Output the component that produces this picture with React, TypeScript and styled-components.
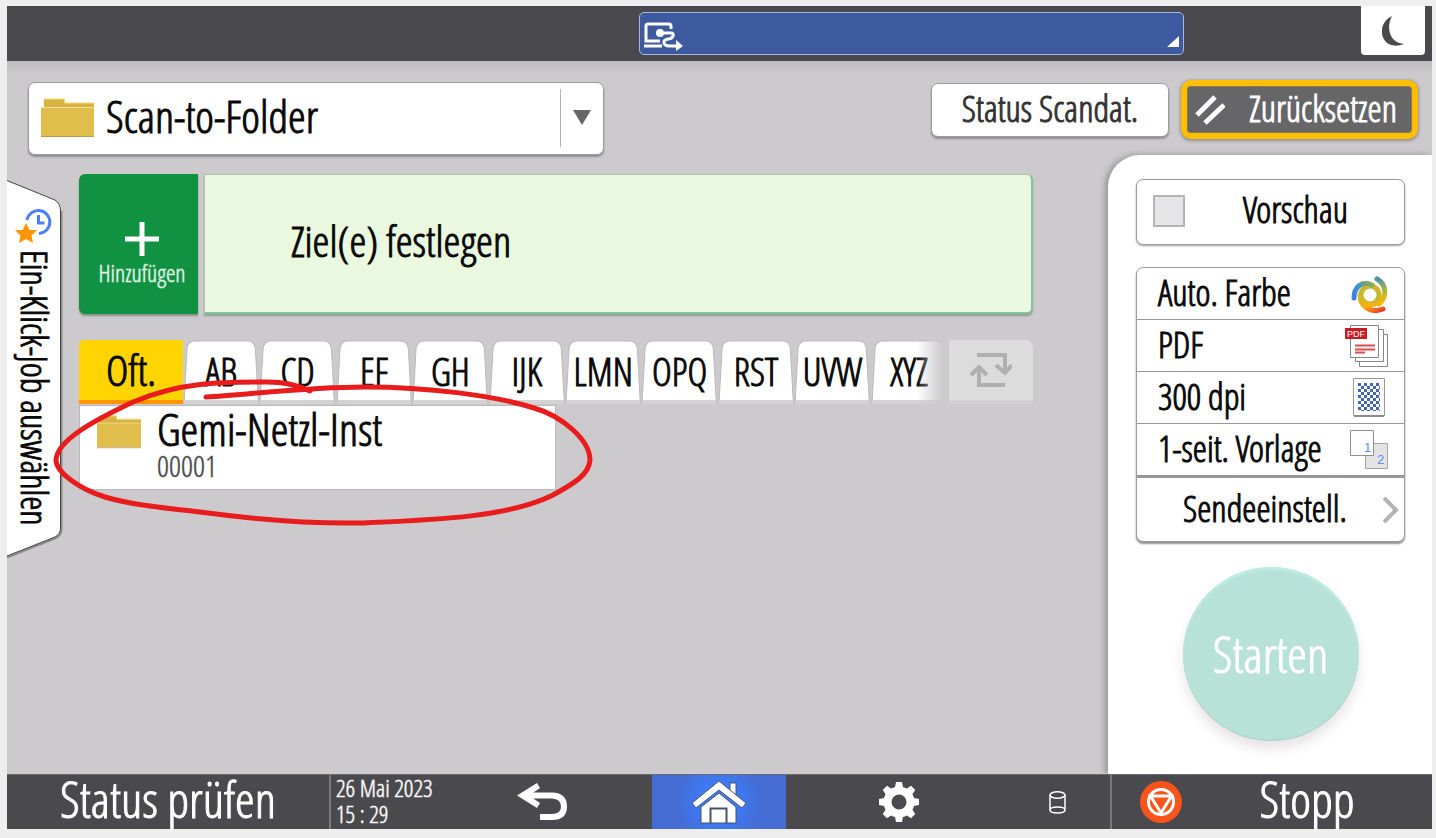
import React from "react";
import styled, { createGlobalStyle, css } from "styled-components";

const GlobalStyle = createGlobalStyle`
  *, *::before, *::after { box-sizing: border-box; }
  body { margin: 0; background: #eeeeee; }
  body, button, select, input {
    font-family: "Open Sans Condensed Light", "Roboto Condensed", "Liberation Sans", sans-serif;
    -webkit-text-stroke: 1px currentColor;
  }
  button, select { margin: 0; padding: 0; border: 0; background: none; color: inherit; cursor: pointer; }
  svg { display: block; flex: none; -webkit-text-stroke: 0; }
`;

const Page = styled.div`
  position: relative;
  display: flex;
  flex-direction: column;
  min-height: 100vh;
  padding: 6px 4px 9px 7px;
  color: #080808;
`;

const TopBar = styled.header`
  display: grid;
  grid-template-columns: 632fr 545fr 177fr 64px;
  height: 55px;
  padding-right: 7px;
  background: #4a494d;
`;

const JobBanner = styled.button`
  grid-column: 2;
  display: flex;
  align-items: center;
  justify-content: space-between;
  height: 43px;
  margin-top: 6px;
  padding: 6px 4px 0 4px;
  border: 1px solid #a9b9dc;
  border-radius: 5px;
  background: #3d59a0;
`;

const BannerCorner = styled.svg`
  align-self: flex-end;
  margin-bottom: 7px;
`;

const SleepButton = styled.button`
  grid-column: 4;
  display: flex;
  align-items: center;
  justify-content: center;
  height: 49px;
  border-radius: 0 0 4px 4px;
  background: #ffffff;
`;

const Body = styled.main`
  flex: 1;
  display: flex;
  flex-direction: column;
  background: linear-gradient(#bdbbbd, #cccacc 12px);
`;

const TitleRow = styled.div`
  display: flex;
  align-items: flex-start;
  height: 94px;
  padding: 19px 14px 0 21px;
`;

const raised = css`
  border: 1px solid #9c9b9d;
  border-radius: 7px;
  background: #ffffff;
  box-shadow: 0 2px 2px #8f8e90;
`;

const AppPicker = styled.label`
  ${raised}
  display: flex;
  align-items: center;
  width: 576px;
  height: 73px;
  margin: 2px auto 0 0;
  padding: 0 0 2px 12px;
`;

const AppSelect = styled.select`
  flex: 1;
  height: 58px;
  padding: 0 0 4px 12px;
  appearance: none;
  border-right: 1px solid #b4b4b4;
  font-size: 45px;
  line-height: 54px;
`;

const PickerArrow = styled.svg`
  margin: 0 12px;
  pointer-events: none;
`;

const StatusButton = styled.button`
  ${raised}
  width: 238px;
  height: 54px;
  margin: 3px 12px 0 0;
  padding-bottom: 2px;
  color: #333333;
  font-size: 36px;
  line-height: 48px;
`;

const ResetButton = styled.button`
  display: flex;
  align-items: center;
  justify-content: space-between;
  width: 237px;
  height: 59px;
  padding: 0 15px 0 8px;
  border: 6px solid #ffbf00;
  border-radius: 10px;
  background: #666567;
  box-shadow: 0 1px 3px 1px #929193, inset 0 0 0 1px #8c7a45;
  color: #ffffff;
  font-size: 36px;
  line-height: 44px;
`;

const ResetText = styled.span`
  padding-bottom: 2px;
`;

const Workspace = styled.div`
  flex: 1;
  display: flex;
`;

const JobTab = styled.button`
  position: relative;
  display: flex;
  flex-direction: column;
  align-items: center;
  gap: 6px;
  flex: none;
  width: 55px;
  height: 378px;
  margin: 25px 17px 0 0;
  padding: 29px 2px 0 0;
  font-size: 36px;
`;

const JobTabShape = styled.svg`
  position: absolute;
  inset: 0;
  overflow: visible;
`;

const JobTabIcon = styled.svg`
  position: relative;
`;

const JobTabLabel = styled.span`
  position: relative;
  writing-mode: vertical-rl;
  line-height: 40px;
  white-space: nowrap;
`;

const Destinations = styled.section`
  flex: 1;
  min-width: 0;
  padding: 19px 75px 20px 0;
`;

const TargetRow = styled.div`
  display: flex;
  gap: 6px;
  height: 140px;
`;

const AddButton = styled.button`
  display: flex;
  flex-direction: column;
  align-items: center;
  gap: 4px;
  width: 119px;
  padding: 48px 0 0 7px;
  border-radius: 6px 0 0 6px;
  background: #119142;
  box-shadow: 0 2px 2px #88908a;
  color: #e6f7ea;
  font-size: 24px;
  line-height: 26px;
  -webkit-text-stroke-color: rgba(230, 247, 234, 0.5);
`;

const TargetField = styled.div`
  flex: 1;
  display: flex;
  align-items: center;
  padding: 0 0 7px 86px;
  border: 1px solid #b3c3a8;
  border-right: 2px solid #82c39b;
  border-bottom: 2px solid #82c39b;
  border-radius: 0 6px 6px 0;
  background: #e9f8de;
  box-shadow: 0 2px 2px #939b94;
  font-size: 43px;
`;

const TabRow = styled.div`
  display: flex;
  height: 65px;
  margin-top: 26px;
`;

const FrequentTab = styled.button`
  width: 104px;
  height: 64px;
  border-bottom: 4px solid #ff9500;
  border-radius: 5px 0 0 0;
  background: #ffd400;
  font-size: 43px;
  line-height: 56px;
`;

const LetterTabButton = styled.button`
  position: relative;
  flex: 1;
  height: 64px;
  padding-bottom: 2px;
  font-size: 38px;
  line-height: 52px;
`;

const TabShape = styled.svg`
  position: absolute;
  inset: 0;
  width: 100%;
  height: 100%;
`;

const TabText = styled.span`
  position: relative;
`;

const TabFade = styled.span`
  position: absolute;
  inset: 0 0 0 auto;
  width: 30px;
  background: linear-gradient(90deg, rgba(204, 202, 204, 0), #cccacc 85%);
`;

const SwitchButton = styled.button`
  display: flex;
  align-items: center;
  justify-content: center;
  width: 84px;
  height: 64px;
  margin-left: 2px;
  border-bottom: 4px solid #d2d1d2;
  border-radius: 0 7px 0 0;
  background: #dcdcdc;
`;

const EntryList = styled.ul`
  margin: 0;
  padding: 0;
  list-style: none;
`;

const Entry = styled.button`
  display: flex;
  align-items: flex-start;
  gap: 16px;
  width: 50%;
  height: 85px;
  padding: 0 17px;
  border: 1px solid #b9b8ba;
  background: #ffffff;
  text-align: left;
`;

const EntryIcon = styled.span`
  padding-top: 9px;
`;

const EntryText = styled.span`
  display: flex;
  flex-direction: column;
`;

const EntryName = styled.span`
  font-size: 45px;
  line-height: 46px;
`;

const EntryCode = styled.span`
  color: #444444;
  font-size: 30px;
  line-height: 28px;
  -webkit-text-stroke-color: rgba(68, 68, 68, 0.4);
`;

const Panel = styled.aside`
  display: flex;
  flex-direction: column;
  align-items: center;
  width: 324px;
  padding: 24px 27px 32px 28px;
  border-radius: 32px 0 0 0;
  background: #ffffff;
  box-shadow: -3px 0 6px #949395;
  clip-path: inset(-8px 0 0 -16px);
  font-size: 36px;
`;

const Preview = styled.label`
  ${raised}
  display: flex;
  align-items: center;
  width: 100%;
  height: 66px;
  padding: 0 16px 2px;
  box-shadow: 0 1px 2px #a2a1a3;
`;

const PreviewBox = styled.input`
  appearance: none;
  flex: none;
  width: 32px;
  height: 32px;
  margin: 0;
  border: 2px solid #b4b4b4;
  background: #e5e5e7;
`;

const PreviewText = styled.span`
  flex: 1;
  padding: 0 0 2px 18px;
  line-height: 48px;
  text-align: center;
`;

const Settings = styled.div`
  ${raised}
  width: 100%;
  margin-top: 22px;
`;

const Setting = styled.button`
  display: flex;
  align-items: center;
  justify-content: space-between;
  width: 100%;
  height: 52px;
  padding: 0 16px 0 21px;
  border-bottom: 1px solid #979698;
  font-size: 36px;
  line-height: 44px;
  white-space: nowrap;
`;

const SettingText = styled.span`
  padding-bottom: 2px;
`;

const SendSettings = styled(Setting)`
  height: 65px;
  padding: 0 5px 0 46px;
  border-top: 2px solid #979698;
  border-bottom: 0;
`;

const StartButton = styled.button`
  width: 176px;
  height: 174px;
  margin-top: 25px;
  border-radius: 50%;
  background: #b8e2d8;
  box-shadow: inset 0 3px 2px #bdece2, inset 0 -1px 1px #abd0c9, 0 8px 12px rgba(90, 60, 80, 0.14);
  color: #ffffff;
  font-size: 50px;
`;

const BottomBar = styled.footer`
  display: grid;
  grid-template-columns: 322fr 110fr 213fr 134fr 226fr 98fr 322fr;
  height: 55px;
  border-top: 1px solid #6c6c6f;
  background: #4a494d;
  color: #ffffff;
`;

const BarText = styled.button`
  padding-bottom: 6px;
  font-size: 50px;
  line-height: 48px;
  white-space: nowrap;
`;

const Clock = styled.time`
  padding-left: 5px;
  border-left: 2px solid #78777a;
  font-size: 24px;
  line-height: 26px;
  white-space: nowrap;
  -webkit-text-stroke-color: rgba(255, 255, 255, 0.5);
`;

const BarIcon = styled.button<{ $nudge?: boolean }>`
  display: flex;
  align-items: center;
  justify-content: center;
  padding-right: ${(p) => (p.$nudge ? "8px" : "0")};
`;

const HomeButton = styled(BarIcon)`
  background: radial-gradient(circle at center, #3c7cff 20%, #456cd2 60%);
`;

const StopButton = styled.button`
  display: flex;
  align-items: center;
  padding-left: 28px;
  border-left: 2px solid #78777a;
`;

const StopText = styled.span`
  flex: 1;
  padding-bottom: 6px;
  text-align: center;
  font-size: 50px;
  line-height: 48px;
`;

const Marking = styled.svg`
  position: absolute;
  left: 50px;
  top: 375px;
  pointer-events: none;
`;

const LETTERS = ["AB", "CD", "EF", "GH", "IJK", "LMN", "OPQ", "RST", "UVW", "XYZ"];

function Folder({ width, height }: { width: number; height: number }) {
  return (
    <svg width={width} height={height} viewBox="0 0 54 40" preserveAspectRatio="none" aria-hidden="true">
      <path d="M3 9V1h21v4h30v7H3Z" fill="#d9b244" />
      <path d="M4 1h20v4h30" fill="none" stroke="#f1dc6e" />
      <path d="M0 9h54v29H0Z" fill="#e1bd4b" />
      <path d="M0 9.500h54" stroke="#f1dc92" />
      <path d="M0 38.500h54" stroke="#b99a57" strokeWidth="1" />
    </svg>
  );
}

function LetterTab({ label, last }: { label: string; last: boolean }) {
  return (
    <LetterTabButton role="tab">
      <TabShape viewBox="0 0 76 64" preserveAspectRatio="none" aria-hidden="true">
        <path d="M1 64 4 9Q5 1 11 1H65Q71 1 72 9L75 64Z" fill="#fff" stroke="#bab9bb" />
        <path d="M1.500 60H74.500V64H1.500Z" fill="#d3d3d3" />
      </TabShape>
      <TabText>{label}</TabText>
      {last && <TabFade />}
    </LetterTabButton>
  );
}

function ColourIcon() {
  return (
    <svg width="38" height="38" viewBox="0 0 38 38" fill="none" aria-hidden="true">
      <defs>
        <linearGradient id="blade1" x1="0" y1="1" x2="1" y2="0">
          <stop offset="0" stopColor="#3d7fe8" />
          <stop offset="0.5" stopColor="#4191cf" />
          <stop offset="1" stopColor="#91ae4a" />
        </linearGradient>
        <linearGradient id="blade2" x1="0" y1="0" x2="0" y2="1">
          <stop offset="0" stopColor="#4c93a8" />
          <stop offset="0.4" stopColor="#a9b63e" />
          <stop offset="1" stopColor="#ffb800" />
        </linearGradient>
        <linearGradient id="blade3" x1="0" y1="0" x2="1" y2="1">
          <stop offset="0" stopColor="#c2bd30" />
          <stop offset="0.5" stopColor="#ffac08" />
          <stop offset="1" stopColor="#e83b2e" />
        </linearGradient>
      </defs>
      <circle cx="20" cy="20" r="9" stroke="#c9b62c" strokeWidth="5" />
      <path d="M4 23C4 12 12 5 22 10" stroke="url(#blade1)" strokeWidth="5" strokeLinecap="round" />
      <path d="M27 4C37 10 37 22 29 29" stroke="url(#blade2)" strokeWidth="5" strokeLinecap="round" />
      <path d="M33 34C20 39 10 31 10 20" stroke="url(#blade3)" strokeWidth="5" strokeLinecap="round" />
      <path d="M14 28C18 31 24 31 28 28" stroke="#f8af13" strokeWidth="4" />
    </svg>
  );
}

function PdfIcon() {
  return (
    <svg width="43" height="44" viewBox="0 0 43 44" aria-hidden="true">
      <g fill="#fff" stroke="#858585">
        <path d="M14.500 10.500h28v32h-28Z" />
        <path d="M10.500 5.500h28v32h-28Z" />
        <path d="M5.500 1.500h28v32h-28Z" />
      </g>
      <path d="M0 4h22v11H0Z" fill="#cc1b22" />
      <text x="11" y="13" textAnchor="middle" fontSize="9" fill="#fff" fontFamily="Liberation Sans">PDF</text>
      <path d="M10 21.500h20M10 25.500h20M10 28.500h10" stroke="#dc4a50" strokeWidth="2" />
    </svg>
  );
}

function ResolutionIcon() {
  return (
    <svg width="35" height="39" viewBox="0 0 35 39" aria-hidden="true">
      <defs>
        <pattern id="dots" width="6" height="6" patternUnits="userSpaceOnUse" x="5" y="5">
          <path d="M0 0h3v3H0ZM3 3h3v3H3Z" fill="#4664b4" />
        </pattern>
      </defs>
      <path d="M.5 .5h31v37H.5Z" fill="#fff" stroke="#979797" />
      <path d="M1 38h30" stroke="#8b8b8b" strokeWidth="2" />
      <path d="M5 5h22v28H5Z" fill="url(#dots)" />
    </svg>
  );
}

function SidesIcon() {
  return (
    <svg width="38" height="39" viewBox="0 0 38 39" fontFamily="Liberation Sans" fontSize="13" fill="#5b8ff0" aria-hidden="true">
      <path d="M15.500 13.500h22v25h-22Z" fill="#e3e3e3" stroke="#a5a5a5" />
      <path d="M.5 .5h23v25H.5Z" fill="#fff" stroke="#8e8e8e" />
      <text x="14" y="22">1</text>
      <text x="27" y="34">2</text>
    </svg>
  );
}

export default function App() {
  return (
    <Page>
      <GlobalStyle />
      <TopBar>
        <JobBanner aria-label="Auftrag">
          <svg width="40" height="30" viewBox="0 0 40 30" fill="none" stroke="#fff" strokeWidth="3" aria-hidden="true">
            <path d="M27 7V4Q27 2 25 2H4Q2 2 2 4V19H16" />
            <path d="M0 24h18" />
            <path d="M16 11h11Q30 11 29 14Q28 17 24 17Q19 18 20 21Q21 24 25 24H34" />
            <circle cx="16" cy="11" r="4" fill="#fff" stroke="none" />
            <path d="M32 18l7 6-7 5Z" fill="#fff" stroke="none" />
          </svg>
          <BannerCorner width="12" height="11" viewBox="0 0 12 11" aria-hidden="true">
            <path d="M12 0v11H0Z" fill="#fff" />
          </BannerCorner>
        </JobBanner>
        <SleepButton aria-label="Energiesparen">
          <svg width="22" height="30" viewBox="0 0 22 30" aria-hidden="true">
            <path d="M10 0C-2 6-3 20 5 27Q12 32 22 28C7 27 4 11 10 0Z" fill="#4a494d" />
          </svg>
        </SleepButton>
      </TopBar>

      <Body>
        <TitleRow>
          <AppPicker>
            <Folder width={53} height={40} />
            <AppSelect aria-label="Funktion">
              <option>Scan-to-Folder</option>
            </AppSelect>
            <PickerArrow width="18" height="15" viewBox="0 0 18 15" aria-hidden="true">
              <path d="M0 0h18L9 15Z" fill="#666567" />
            </PickerArrow>
          </AppPicker>
          <StatusButton>Status Scandat.</StatusButton>
          <ResetButton>
            <svg width="30" height="30" viewBox="0 0 30 30" stroke="#fff" strokeWidth="5" aria-hidden="true">
              <path d="M2 20 20 2M10 28 29 10" />
            </svg>
            <ResetText>Zurücksetzen</ResetText>
          </ResetButton>
        </TitleRow>

        <Workspace>
          <JobTab>
            <JobTabShape width="55" height="378" viewBox="0 0 55 378" aria-hidden="true">
              <path d="M0 377.500 49 358Q54.500 355 54.500 349V31" fill="none" stroke="#8b8a8c" strokeWidth="2" />
              <path d="M0 .5 48 20Q53.500 24 53.500 31V348Q53.500 354 48 357L0 376Z" fill="#fff" />
              <path d="M0 .5 48 20Q53.500 24 53.500 31V348Q53.500 354 48 357L0 376" fill="none" stroke="#444" />
            </JobTabShape>
            <JobTabIcon width="37" height="35" viewBox="0 0 37 35" aria-hidden="true">
              <path d="M12 11A11.500 11.500 0 1 1 24 24.500" fill="none" stroke="#4c80f2" strokeWidth="3" />
              <path d="M23.500 6v8h6" fill="none" stroke="#4c80f2" strokeWidth="3" />
              <path d="m11 14 3.500 7H22l-5.500 5.500L18 34l-7-4-7 4 1.500-7.500L0 21h7.500Z" fill="#ff9500" />
            </JobTabIcon>
            <JobTabLabel>Ein-Klick-Job auswählen</JobTabLabel>
          </JobTab>

          <Destinations>
            <TargetRow>
              <AddButton>
                <svg width="34" height="34" viewBox="0 0 34 34" aria-hidden="true">
                  <path d="M17 0v34M0 17h34" stroke="#fff" strokeWidth="5" />
                </svg>
                Hinzufügen
              </AddButton>
              <TargetField>Ziel(e) festlegen</TargetField>
            </TargetRow>
            <TabRow role="tablist">
              <FrequentTab role="tab" aria-selected="true">Oft.</FrequentTab>
              {LETTERS.map((l, i) => (
                <LetterTab key={l} label={l} last={i === LETTERS.length - 1} />
              ))}
              <SwitchButton aria-label="Titel wechseln">
                <svg width="42" height="34" viewBox="0 0 42 34" fill="none" stroke="#b0b0b0" strokeWidth="4" aria-hidden="true">
                  <path d="M7 2h28v18M26 12l9 8 7-8" />
                  <path d="M35 32H9V14M1 22l8-8 8 8" />
                </svg>
              </SwitchButton>
            </TabRow>
            <EntryList>
              <li>
                <Entry>
                  <EntryIcon><Folder width={44} height={34} /></EntryIcon>
                  <EntryText>
                    <EntryName>Gemi-Netzl-Inst</EntryName>
                    <EntryCode>00001</EntryCode>
                  </EntryText>
                </Entry>
              </li>
            </EntryList>
          </Destinations>

          <Panel>
            <Preview>
              <PreviewBox type="checkbox" />
              <PreviewText>Vorschau</PreviewText>
            </Preview>
            <Settings>
              <Setting><SettingText>Auto. Farbe</SettingText><ColourIcon /></Setting>
              <Setting><SettingText>PDF</SettingText><PdfIcon /></Setting>
              <Setting><SettingText>300 dpi</SettingText><ResolutionIcon /></Setting>
              <Setting><SettingText>1-seit. Vorlage</SettingText><SidesIcon /></Setting>
              <SendSettings>
                <SettingText>Sendeeinstell.</SettingText>
                <svg width="16" height="28" viewBox="0 0 16 28" fill="none" stroke="#b3b3b3" strokeWidth="4" aria-hidden="true">
                  <path d="M1 2 13 14 1 26" />
                </svg>
              </SendSettings>
            </Settings>
            <StartButton>Starten</StartButton>
          </Panel>
        </Workspace>
      </Body>

      <BottomBar>
        <BarText>Status prüfen</BarText>
        <Clock>26 Mai 2023<br />15 : 29</Clock>
        <BarIcon $nudge aria-label="Zurück">
          <svg width="50" height="38" viewBox="0 0 50 38" fill="none" aria-hidden="true">
            <path d="M10 12.500H35Q47 13 47 23.500T35 34H23" stroke="#fff" strokeWidth="6" />
            <path d="M20 0 0 12.500 20 25l3-5-11-7.500L23 5Z" fill="#fff" />
          </svg>
        </BarIcon>
        <HomeButton aria-label="Startseite">
          <svg width="54" height="43" viewBox="0 0 54 43" fill="#fff" stroke="#46526e" strokeWidth="1" aria-hidden="true">
            <path d="M38 2h6v17l-6-5Z" />
            <path d="M27 12 44 26v16H9V26Z" />
            <path d="M27 0 54 22l-4 5L27 9 4 27 0 22Z" />
            <path d="M18.500 42V27.500h16V42" fill="none" strokeWidth="2" />
          </svg>
        </HomeButton>
        <BarIcon aria-label="Einstellungen">
          <svg width="40" height="40" viewBox="-20 -20 40 40" fill="#fff" aria-hidden="true">
            <circle r="11.500" fill="none" stroke="#fff" strokeWidth="8" />
            {[0, 45, 90, 135, 180, 225, 270, 315].map((a) => (
              <path key={a} d="M-4.500-12-3-20H3L4.500-12Z" transform={`rotate(${a})`} />
            ))}
          </svg>
        </BarIcon>
        <BarIcon $nudge aria-label="Speicher">
          <svg width="17" height="23" viewBox="0 0 17 23" fill="none" stroke="#ffffff" strokeWidth="1.500" aria-hidden="true">
            <ellipse cx="8.500" cy="4" rx="7.500" ry="3.200" />
            <path d="M1 4v15c0 4 15 4 15 0V4M1 19c0-4 15-4 15 0" />
          </svg>
        </BarIcon>
        <StopButton>
          <svg width="42" height="42" viewBox="-21 -21 42 42" aria-hidden="true">
            <circle r="21" fill="#f9541b" />
            <g fill="none" stroke="#fff" strokeWidth="3">
              <circle r="12.500" />
              <path d="M-10.500-6H10.500L0 11Z" />
            </g>
          </svg>
          <StopText>Stopp</StopText>
        </StopButton>
      </BottomBar>

      <Marking width="550" height="155" viewBox="50 375 550 155" fill="none" stroke="#e81c1c" strokeWidth="5" strokeLinecap="round" strokeLinejoin="round" aria-hidden="true">
        <path d="M206 397C252 394 310 387 365 387C426 387 493 395 534 408C562 416 590 440 590 460C589 475 573 484 553 495C507 518 430 520 360 523C300 524 245 518 200 512C166 508 132 505 105 497C79 489 56 472 56 460C57 440 95 420 133 402C180 382 220 382 267 382C287 382 300 386 310 391" />
      </Marking>
    </Page>
  );
}
